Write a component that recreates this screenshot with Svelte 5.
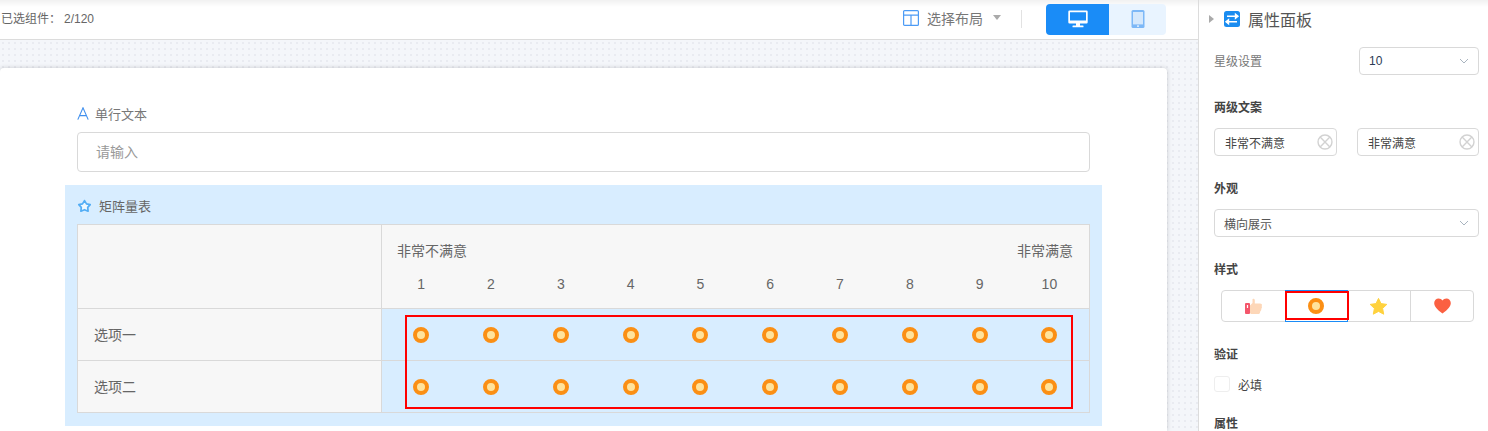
<script>
	const scale = [1, 2, 3, 4, 5, 6, 7, 8, 9, 10];
	const rows = ['选项一', '选项二'];
</script>

<div class="page">
	<div class="main">
		<header class="toolbar">
			<span class="count">已选组件：<span class="num">2/120</span></span>
			<div class="tools">
				<div class="layout-pick">
					<svg width="16" height="16" viewBox="0 0 16 16" fill="none" stroke="#4c9bf5" stroke-width="1.2">
						<rect x="0.6" y="0.6" width="14.8" height="14.8" rx="1" />
						<path d="M0.6 5.2H15.4M8 5.2V15.4" />
					</svg>
					<span class="layout-label">选择布局</span>
					<span class="caret"></span>
				</div>
				<span class="divider"></span>
				<div class="devices">
					<button class="device active" aria-label="桌面">
						<svg width="20" height="18" viewBox="0 0 20 18" fill="#fff">
							<path d="M1.5 0.5H18.5A1.2 1.2 0 0 1 19.7 1.7V12.3A1.2 1.2 0 0 1 18.5 13.5H1.5A1.2 1.2 0 0 1 0.3 12.3V1.7A1.2 1.2 0 0 1 1.5 0.5ZM2 2.2V10.6H18V2.2Z" fill-rule="evenodd" />
							<rect x="8" y="13" width="4" height="3" />
							<rect x="4.5" y="15.6" width="11" height="1.6" rx="0.5" />
						</svg>
					</button>
					<button class="device" aria-label="平板">
						<svg width="14" height="18" viewBox="0 0 14 18">
							<rect x="0.5" y="0" width="13" height="18" rx="1.5" fill="#7db8f7" />
							<rect x="2" y="2" width="10" height="12.4" fill="#d5e8fc" />
							<circle cx="7" cy="16.1" r="0.9" fill="#fff" />
						</svg>
					</button>
				</div>
			</div>
		</header>

		<div class="canvas">
			<div class="card">
				<div class="field">
					<div class="field-label">
						<svg width="12" height="13" viewBox="0 0 12 13" fill="none" stroke="#3f8fee" stroke-width="1.1">
							<path d="M0.8 12.6L6 0.8L11.2 12.6M2.6 8.6H9.4" />
						</svg>
						<span>单行文本</span>
					</div>
					<div class="text-input">请输入</div>
				</div>

				<div class="matrix">
					<div class="matrix-label">
						<svg width="15" height="14" viewBox="0 0 15 14" fill="#eef8ff" stroke="#52adf5" stroke-width="1.7" stroke-linejoin="round">
							<path d="M7.5 1.6L9.5 4.9L13.2 5.7L10.7 8.4L11.1 12.2L7.5 10.7L3.9 12.2L4.3 8.4L1.8 5.7L5.5 4.9Z" />
						</svg>
						<span>矩阵量表</span>
					</div>
					<div class="table">
						<div class="head-row">
							<div class="name-cell"></div>
							<div class="head-scale">
								<div class="ends"><span>非常不满意</span><span>非常满意</span></div>
								<div class="nums">
									{#each scale as n}
										<span>{n}</span>
									{/each}
								</div>
							</div>
						</div>
						<div class="rows">
							{#each rows as row}
								<div class="row">
									<div class="name-cell"><span class="row-name">{row}</span></div>
									<div class="dots">
										{#each scale as n}
											<span class="dot-cell"><span class="dot"></span></span>
										{/each}
									</div>
								</div>
							{/each}
							<div class="mark mark-table"></div>
						</div>
					</div>
				</div>
			</div>
		</div>
	</div>

	<aside class="panel">
		<div class="panel-title">
			<span class="tri"></span>
			<svg width="16" height="16" viewBox="0 0 16 16">
				<rect width="16" height="16" rx="2.5" fill="#1a8cf0" />
				<path d="M3 5.2H11.5M11.5 3.2V7.2L14 5.2ZM13 10.8H4.5M4.5 8.8V12.8L2 10.8Z" stroke="#fff" stroke-width="1.4" fill="#fff" />
			</svg>
			<span>属性面板</span>
		</div>

		<div class="inline-row">
			<span class="plain-label">星级设置</span>
			<div class="select small">
				<span class="select-num">10</span>
				<svg width="10" height="6" viewBox="0 0 10 6" fill="none" stroke="#a9b4bf"><path d="M1 1L5 5L9 1" /></svg>
			</div>
		</div>

		<h4 class="sec first">两级文案</h4>
		<div class="pair">
			<div class="clear-input">
				<span>非常不满意</span>
				<svg width="16" height="16" viewBox="0 0 17 17" fill="none" stroke="#d2d2d2" stroke-width="1.5"><circle cx="8.5" cy="8.5" r="7.4" /><path d="M3.3 3.3L13.7 13.7M13.7 3.3L3.3 13.7" /></svg>
			</div>
			<div class="clear-input second">
				<span>非常满意</span>
				<svg width="16" height="16" viewBox="0 0 17 17" fill="none" stroke="#d2d2d2" stroke-width="1.5"><circle cx="8.5" cy="8.5" r="7.4" /><path d="M3.3 3.3L13.7 13.7M13.7 3.3L3.3 13.7" /></svg>
			</div>
		</div>

		<h4 class="sec">外观</h4>
		<div class="select">
			<span>横向展示</span>
			<svg width="10" height="6" viewBox="0 0 10 6" fill="none" stroke="#a9b4bf"><path d="M1 1L5 5L9 1" /></svg>
		</div>

		<h4 class="sec">样式</h4>
		<div class="seg">
			<div class="seg-cell">
				<svg width="17" height="17" viewBox="0 0 17 17">
					<rect x="0" y="5" width="5" height="11" rx="1" fill="#f4566b" />
					<rect x="1.9" y="7" width="1.2" height="3" fill="#fff" />
					<path d="M5 7.5L7.5 5V1.2C7.5 0.4 9.6 0.4 9.8 2V5.4H15C17 5.4 17.4 7 16.6 8C17.2 9 17 10.2 16.2 10.8C16.6 12 16 13 15.2 13.4C15.2 15 14.4 16 13 16H7C6 16 5 15.5 5 15Z" fill="#fdd7b8" />
				</svg>
			</div>
			<div class="seg-cell picked">
				<span class="dot"></span>
				<div class="mark mark-seg"></div>
			</div>
			<div class="seg-cell">
				<svg width="17" height="17" viewBox="0 0 17 17"><path d="M8.5 0.4L11 5.6L16.8 6.4L12.6 10.4L13.7 16.2L8.5 13.4L3.3 16.2L4.4 10.4L0.2 6.4L6 5.6Z" fill="#ffd23e" stroke="#ffd23e" stroke-linejoin="round" /></svg>
			</div>
			<div class="seg-cell">
				<svg width="17" height="16" viewBox="0 0 17 16"><path d="M8.5 15.6C3 11.4 0.2 8.6 0.2 5C0.2 2.2 2.2 0.4 4.6 0.4C6.2 0.4 7.7 1.2 8.5 2.6C9.3 1.2 10.8 0.4 12.4 0.4C14.8 0.4 16.8 2.2 16.8 5C16.8 8.6 14 11.4 8.5 15.6Z" fill="#fb6042" /></svg>
			</div>
		</div>

		<h4 class="sec">验证</h4>
		<label class="check"><span class="box"></span><span>必填</span></label>

		<h4 class="sec last">属性</h4>
	</aside>
</div>

<style>
	:global(body) {
		margin: 0;
		background: #fff;
	}

	.page {
		display: flex;
		width: 1488px;
		height: 431px;
		overflow: hidden;
		font-family: "Liberation Sans", "Noto Sans CJK SC", sans-serif;
		color: #606060;
	}

	/* --- Left side --- */
	.main {
		width: 1198px;
		flex: none;
		display: flex;
		flex-direction: column;
	}
	.toolbar {
		height: 39px;
		flex: none;
		display: flex;
		align-items: center;
		justify-content: space-between;
		padding: 0 32px 0 1px;
		background: linear-gradient(#f1f1f1, #fff 7px);
		border-bottom: 1px solid #dcdcdc;
		font-size: 12px;
	}
	.count {
		margin-top: -4px;
		color: #666;
	}
	.num { margin-left: 3px; }
	.tools {
		display: flex;
		align-items: center;
		margin-top: -1px;
	}
	.layout-pick {
		display: flex;
		align-items: center;
		margin-top: -3px;
	}
	.layout-label {
		margin-left: 8px;
		font-size: 14px;
		color: #777;
	}
	.caret {
		margin-left: 10px;
		border: 4px solid transparent;
		border-top: 5px solid #aaa;
		border-bottom: 0;
	}
	.divider {
		width: 1px;
		height: 18px;
		margin: 0 24px 0 20px;
		background: #e2e2e2;
	}
	.devices { display: flex; }
	.device {
		width: 57px;
		height: 31px;
		padding: 0;
		border: 0;
		display: flex;
		align-items: center;
		justify-content: center;
		background: #e9f4ff;
		border-radius: 0 4px 4px 0;
	}
	.device.active {
		width: 63px;
		background: #1a8cf7;
		border-radius: 4px 0 0 4px;
	}

	.canvas {
		flex: 1;
		padding: 28px 31px 0 0;
		background-color: #f4f6fa;
		background-image: radial-gradient(#e9ebf1 1px, transparent 1.2px);
		background-size: 6px 6px;
	}
	.card {
		height: 100%;
		padding-top: 36px;
		box-sizing: border-box;
		background: #fff;
		border-radius: 4px 4px 0 0;
		box-shadow: 0 0 5px rgba(0, 0, 0, 0.18);
	}
	.field { padding: 0 77px; }
	.field-label {
		display: flex;
		align-items: center;
		gap: 6px;
		height: 18px;
		font-size: 13px;
		color: #777;
	}
	.text-input {
		margin-top: 10px;
		height: 38px;
		padding-left: 18px;
		line-height: 38px;
		font-size: 14px;
		color: #999;
		border: 1px solid #d9d9d9;
		border-radius: 4px;
	}

	.matrix {
		margin: 13px 65px 0;
		padding: 0 12px 13px;
		background: #d8edff;
	}
	.matrix-label {
		display: flex;
		align-items: center;
		gap: 7px;
		height: 39px;
		padding-top: 2px;
		box-sizing: border-box;
		font-size: 13px;
		color: #666;
	}
	.table {
		border: 1px solid #d9d9d9;
	}
	.head-row, .row { display: flex; }
	.name-cell {
		width: 304px;
		flex: none;
		display: flex;
		align-items: center;
		padding-left: 16px;
		box-sizing: border-box;
		background: #f7f7f7;
		border-right: 1px solid #d9d9d9;
		font-size: 14px;
		color: #666;
	}
	.row-name { margin-top: -2px; }
	.head-scale {
		flex: 1;
		height: 83px;
		background: #f7f7f7;
		font-size: 14px;
		color: #666;
	}
	.ends {
		display: flex;
		justify-content: space-between;
		padding: 17px 16px 0 15px;
		line-height: 18px;
	}
	.nums {
		display: grid;
		grid-template-columns: repeat(10, 1fr);
		margin-top: 15px;
		padding: 0 4.7px 0 4.3px;
		text-align: center;
		line-height: 18px;
	}
	.rows { position: relative; }
	.row {
		height: 52px;
		border-top: 1px solid #d9d9d9;
		box-sizing: border-box;
	}
	.dots {
		flex: 1;
		display: grid;
		grid-template-columns: repeat(10, 1fr);
		padding: 0 4.7px 0 4.3px;
		align-items: center;
	}
	.dot-cell {
		display: flex;
		justify-content: center;
	}
	.dot {
		display: block;
		width: 8px;
		height: 8px;
		border: 4px solid #fb8f14;
		border-radius: 50%;
		background: #ffe39c;
	}

	/* annotation boxes drawn over the screenshot */
	.mark {
		position: absolute;
		box-sizing: border-box;
		border: 2px solid #f00;
		pointer-events: none;
	}
	.mark-table {
		left: 327px;
		top: 7px;
		width: 668px;
		height: 94px;
	}
	.mark-seg {
		left: 0;
		top: 1px;
		width: 64px;
		height: 29px;
	}

	/* --- Right panel --- */
	.panel {
		flex: 1;
		box-sizing: border-box;
		padding: 0 9px 0 15px;
		border-left: 1px solid #dcdcdc;
		background: linear-gradient(#f1f1f1, #fff 7px);
		font-size: 12px;
		color: #666;
	}
	.panel-title {
		display: flex;
		align-items: center;
		height: 39px;
		margin-left: -5px;
		padding-bottom: 2px;
		box-sizing: border-box;
		font-size: 16px;
		color: #555;
	}
	.tri {
		width: 0;
		margin-right: 10px;
		border: 4.5px solid transparent;
		border-left: 5px solid #aaa;
		border-right: 0;
	}
	.panel-title span:last-child { margin-left: 8px; }
	.inline-row {
		display: flex;
		align-items: center;
		justify-content: space-between;
		margin-top: 8px;
	}
	.plain-label {
		margin-top: -2px;
		color: #777;
	}
	.select {
		display: flex;
		align-items: center;
		justify-content: space-between;
		box-sizing: border-box;
		height: 28px;
		padding: 0 9px;
		border: 1px solid #d9d9d9;
		border-radius: 4px;
		color: #555;
	}
	.select.small { width: 120px; }
	.select-num { color: #2b3a55; }
	.sec {
		margin: 23px 0 0;
		height: 18px;
		line-height: 20px;
		font-size: 12px;
		font-weight: 700;
		color: #444;
	}
	.sec + .pair, .sec + .select { margin-top: 12px; }
	.pair {
		display: flex;
		justify-content: space-between;
	}
	.clear-input {
		display: flex;
		align-items: center;
		justify-content: space-between;
		box-sizing: border-box;
		width: 123px;
		height: 28px;
		padding: 0 3px 0 10px;
		border: 1px solid #d9d9d9;
		border-radius: 4px;
		color: #444;
	}
	.clear-input.second { width: 122px; }
	.seg {
		display: grid;
		grid-template-columns: repeat(4, 1fr);
		height: 32px;
		margin: 12px 5px 0 7px;
		box-sizing: border-box;
		border: 1px solid #d9d9d9;
		border-radius: 4px;
	}
	.seg-cell {
		position: relative;
		display: flex;
		align-items: center;
		justify-content: center;
		box-sizing: border-box;
	}
	.seg-cell:nth-child(4) { border-left: 1px solid #d9d9d9; }
	.seg-cell.picked {
		margin: -1px 0;
		outline: 1px solid #1a8cf7;
		outline-offset: -1px;
	}
	.check {
		display: flex;
		align-items: center;
		gap: 8px;
		margin-top: 7px;
		height: 28px;
		color: #444;
	}
	.box {
		width: 14px;
		height: 14px;
		border: 1px solid #eee;
		border-radius: 3px;
	}
	.sec.last { margin-top: 16px; }
</style>
